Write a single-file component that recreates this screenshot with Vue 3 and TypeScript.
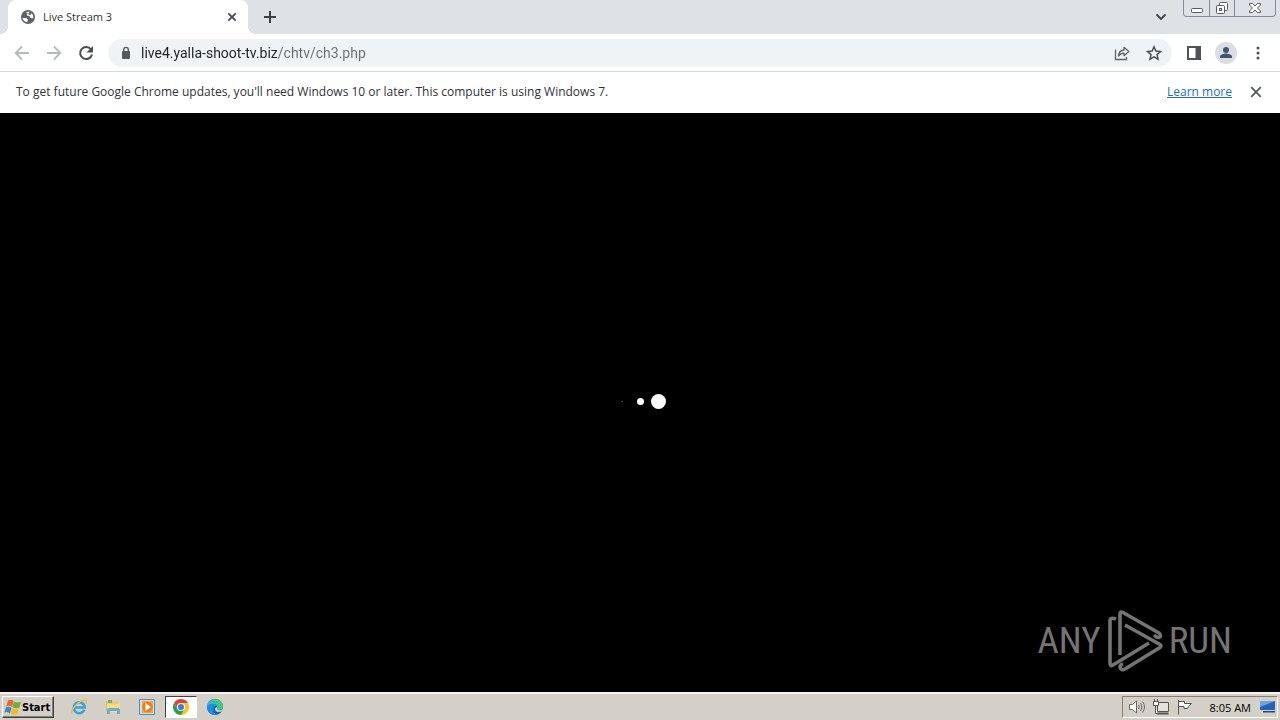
<script setup lang="ts">
import { ref } from 'vue'

const address = ref<string>('live4.yalla-shoot-tv.biz/chtv/ch3.php')
const showNotice = ref<boolean>(true)
const time = ref<string>('8:05 AM')
</script>

<template>
  <div class="desktop">
    <header class="tabstrip">
      <div class="tab">
        <svg class="globe" viewBox="0 0 16 16" width="16" height="16">
          <circle cx="8" cy="8" r="7" fill="#5f6368" />
          <path d="M2.600 9C5 8.700 7 9 7.800 10.200L7.300 13.300C5 12.900 3 11.400 2.600 9zM6 3.200L9.500 2.600 8.800 4.300 6.800 5.200 7 6.500 9.500 7 10.500 9 13.200 9.300C13.600 7 12.600 4.800 11 3.700L11.300 5.200 10 6 8.800 5.500z" fill="#fff" />
        </svg>
        <span class="tab-title">Live Stream 3</span>
        <button class="plain tab-close" aria-label="Close tab">
          <svg viewBox="0 0 16 16" width="16" height="16"><path d="M4.300 4.300l7.400 7.400M11.700 4.300l-7.400 7.400" stroke="#45494d" stroke-width="1.800" /></svg>
        </button>
      </div>
      <button class="plain new-tab" aria-label="New tab">
        <svg viewBox="0 0 16 16" width="16" height="16"><path d="M8 2v12M2 8h12" stroke="#3c4043" stroke-width="2" /></svg>
      </button>
      <button class="plain search-tabs" aria-label="Search tabs">
        <svg viewBox="0 0 16 16" width="16" height="16"><path d="M3.500 5.500L8 10l4.500-4.500" fill="none" stroke="#3c4043" stroke-width="1.800" /></svg>
      </button>
      <div class="window-controls">
        <button class="plain" aria-label="Minimize">
          <svg viewBox="0 0 24 16" width="24" height="16"><rect x="6.500" y="8.500" width="11" height="4" rx="1" fill="#fff" stroke="#555a66" /></svg>
        </button>
        <button class="plain" aria-label="Restore">
          <svg viewBox="0 0 24 16" width="24" height="16"><g fill="#fff" stroke="#555a66"><rect x="9.500" y="2.500" width="8" height="8" rx="1" /><rect x="6.500" y="5.500" width="8" height="8" rx="1" /><rect x="9.500" y="8.500" width="2" height="2" /></g></svg>
        </button>
        <button class="plain wide" aria-label="Close window">
          <svg viewBox="0 0 24 16" width="24" height="16"><path d="M6.500 3.500h3l2.500 2.500 2.500-2.500h3v1.500l-3 3 3 3v1.500h-3L12 10l-2.500 2.500h-3V11l3-3-3-3z" fill="#fff" stroke="#555a66" /></svg>
        </button>
      </div>
    </header>

    <nav class="toolbar" aria-label="Browser toolbar">
      <button class="plain nav" aria-label="Back">
        <svg viewBox="0 0 16 16" width="16" height="16"><path d="M15 8H2M8 1.500L1.700 8 8 14.500" fill="none" stroke="#b6b9bd" stroke-width="1.800" /></svg>
      </button>
      <button class="plain nav" aria-label="Forward">
        <svg viewBox="0 0 16 16" width="16" height="16"><path d="M1 8h13M8 1.500L14.300 8 8 14.500" fill="none" stroke="#b6b9bd" stroke-width="1.800" /></svg>
      </button>
      <button class="plain nav" aria-label="Reload">
        <svg viewBox="0 0 16 16" width="16" height="16"><path d="M13 4.500A6 6 0 1 0 14 9.500" fill="none" stroke="#4b4f53" stroke-width="2" /><path d="M15 1v6.500H8.500z" fill="#4b4f53" /></svg>
      </button>
      <div class="omnibox">
        <button class="plain lock" aria-label="View site information">
          <svg viewBox="0 0 12 14" width="12" height="14"><rect x="2" y="5" width="8" height="8" rx="1" fill="#55595d" /><path d="M3.700 6V3.700a2.300 2.300 0 0 1 4.600 0V6" fill="none" stroke="#55595d" stroke-width="1.400" /></svg>
        </button>
        <input v-model="address" class="address" type="text" aria-label="Address and search bar" spellcheck="false" />
        <button class="plain pill-icon" aria-label="Share this page">
          <svg viewBox="0 0 16 16" width="16" height="16"><path d="M1.500 4.500v10h11V12" fill="none" stroke="#5f6368" stroke-width="1.300" /><path d="M4.500 11C4.700 7.500 6.500 5.200 10 5V2.300L14.800 6.600 10 10.700V8.200C7.600 8.200 6 9 4.500 11z" fill="none" stroke="#5f6368" stroke-width="1.300" stroke-linejoin="round" /></svg>
        </button>
        <button class="plain pill-icon" aria-label="Bookmark this tab">
          <svg viewBox="0 0 16 16" width="16" height="16"><path d="M8 1.800l1.850 4.300 4.650.4-3.500 3.100 1.050 4.600L8 11.800l-4.050 2.400L5 9.600 1.500 6.500l4.650-.4z" fill="none" stroke="#4b4f53" stroke-width="1.500" /></svg>
        </button>
      </div>
      <div class="actions">
        <button class="plain action" aria-label="Side panel">
          <svg viewBox="0 0 16 16" width="16" height="16"><path d="M1 1h14v14H1zM3 3v10h6.500V3z" fill="#4f5357" fill-rule="evenodd" /></svg>
        </button>
        <button class="plain action" aria-label="Profile">
          <svg viewBox="0 0 22 22" width="22" height="22"><circle cx="11" cy="11" r="11" fill="#dadde3" /><circle cx="11" cy="8" r="3" fill="#46536e" /><path d="M5 16v-1.500c0-2 4-3 6-3s6 1 6 3V16z" fill="#46536e" /></svg>
        </button>
        <button class="plain action" aria-label="Menu">
          <svg viewBox="0 0 16 16" width="16" height="16" fill="#4b4f53"><circle cx="8" cy="3" r="1.500" /><circle cx="8" cy="8" r="1.500" /><circle cx="8" cy="13" r="1.500" /></svg>
        </button>
      </div>
    </nav>

    <section v-if="showNotice" class="notice">
      <p>To get future Google Chrome updates, you'll need Windows 10 or later. This computer is using Windows 7.</p>
      <a href="#">Learn more</a>
      <button class="plain notice-close" aria-label="Dismiss" @click="showNotice = false">
        <svg viewBox="0 0 16 16" width="16" height="16"><path d="M3.200 3.200l9.600 9.600M12.800 3.200l-9.600 9.600" stroke="#55595d" stroke-width="1.800" /></svg>
      </button>
    </section>

    <main class="player">
      <div class="loader" role="status" aria-label="Loading">
        <i class="dot tiny"></i><i class="dot small"></i><i class="dot large"></i>
      </div>
      <div class="watermark">
        <span>ANY</span>
        <svg viewBox="0 0 58 62" width="58" height="62" fill="none" stroke="#747474" stroke-width="3.600" stroke-linejoin="round" stroke-linecap="butt">
          <path d="M10 9Q4 7 4 11V53Q4 57 7 55L43 33" />
          <path d="M14 45V4Q14 1 17 2.500L53 23Q56 26 53 27.500Q51 28 48 25" />
          <path d="M19 15L54 34.500Q56 36 54 37.500L19 59Q15 61 14 57Q14 55 17 54" />
        </svg>
        <span>RUN</span>
      </div>
    </main>

    <footer class="taskbar">
      <button class="start">
        <svg viewBox="0 0 18 16" width="18" height="16">
          <path d="M4 1.500Q7 0 9.500 2L8 8Q5 6 2.300 7.500z" fill="#e8662b" />
          <path d="M10 2.500Q13 4.500 17 2.500L15.500 8.500Q12 10 8.500 8.200z" fill="#71ad3c" />
          <path d="M2 8.300Q5 7 7.500 9L6 14.500Q3.500 12 .500 13.500z" fill="#3d86c8" />
          <path d="M8.200 9.200Q11.500 11 15 9.500L13.500 15Q10 16.500 6.800 14.800z" fill="#f2ba26" />
        </svg>
        Start
      </button>
      <div class="launchers">
        <button class="plain launcher" aria-label="Internet Explorer">
          <svg viewBox="0 0 18 18" width="18" height="18" fill="none"><path d="M14.300 11.800A5.500 5.500 0 1 1 14.700 9.500H5" stroke="#38a3df" stroke-width="2.600" /><path d="M2.500 16C-.5 14 5 6 12 2.700c4-1.800 5.500-.4 3.700 2.900" stroke="#ebbd43" stroke-width="1.300" /></svg>
        </button>
        <button class="plain launcher" aria-label="File Explorer">
          <svg viewBox="0 0 18 18" width="18" height="18"><path d="M2 3h5l1 1.500h7V13H2z" fill="#e5bd58" /><path d="M4 2h4v3H4z" fill="#71b36d" /><path d="M3 5.500h13V14H3z" fill="#f8dd87" /><path d="M3 16v-4q0-2 2-2h9q2 0 2 2v4h-3v-3H6v3z" fill="#6aaed5" /></svg>
        </button>
        <button class="plain launcher" aria-label="Media Player">
          <svg viewBox="0 0 18 18" width="18" height="18"><path d="M1.500 1.500h15v15h-15z" fill="#c9e2f3" stroke="#4b8fc4" /><path d="M4 3h11v12H4z" fill="#f7a142" /><circle cx="9.500" cy="9" r="5.200" fill="#ef7d16" /><path d="M7.500 5.300l5.500 3.700-5.500 3.700z" fill="#fff" /></svg>
        </button>
        <button class="plain launcher active" aria-label="Google Chrome">
          <svg viewBox="0 0 18 18" width="18" height="18"><path d="M9 9L2.070 5A8 8 0 0 1 15.930 5z" fill="#e34133" /><path d="M9 9L15.930 5A8 8 0 0 1 9 17z" fill="#f9c51e" /><path d="M9 5h6.930L12 10z" fill="#f9c51e" /><path d="M2.070 5H9V9L5.500 11z" fill="#e34133" /><path d="M2.070 5L5.540 11 12.460 11 9 17A8 8 0 0 1 2.070 5z" fill="#2d9d50" /><circle cx="9" cy="9" r="4" fill="#fff" /><circle cx="9" cy="9" r="3.100" fill="#3e7de6" /></svg>
        </button>
        <button class="plain launcher" aria-label="Microsoft Edge">
          <svg viewBox="0 0 18 18" width="18" height="18"><circle cx="9" cy="9" r="8" fill="#1766b5" /><path d="M1 9A8 8 0 0 1 17 8.500c0 3-2.500 4-5.500 3.300-1-.3.300-1.300 0-2.800C11 6.500 4 5 1 9z" fill="#32b9d2" /><path d="M8 1.100C13 .5 17 4 17 8.500c0 2.800-2.500 4-5.500 3.300-1-.3.300-1.300 0-2.800C12 6 9 4 6 4z" fill="#4bc27e" /><path d="M1 9C3 5 9.500 5 11.300 8 8 7 5.500 11 8 14.500 9 16 10 16.500 11 16.700 5 18 1 14 1 9z" fill="#1f8fdc" /><path d="M11.300 9c-.5 1.800-.6 2.500.5 2.900 2 .7 4 .2 5-.9l-1 2.200c-3 1.500-6.800.8-6.800-2.200 0-1 1-2 2.300-2z" fill="#d4d0c8" /></svg>
        </button>
      </div>
      <div class="tray">
        <button class="plain" aria-label="Volume">
          <svg viewBox="0 0 18 16" width="18" height="16" fill="none" stroke="#666"><path d="M1.500 5.500h3l4-3.500v12l-4-3.500h-3z" fill="#fff" /><path d="M10.500 6q1.500 2 0 4M12.500 4q3 4 0 8M14.500 2.500q4 5.500 0 11" /></svg>
        </button>
        <button class="plain" aria-label="Network">
          <svg viewBox="0 0 18 16" width="18" height="16" fill="none" stroke="#555"><path d="M5.500 3.500h11v9h-11z" fill="#e4e1da" /><path d="M4.500 14.500h12" stroke-width="2" /><path d="M1.500 2.500h5v4h-5zM2.500 0v2.500M5.500 0v2.500M3.500 7v7.500h2" fill="#fff" /></svg>
        </button>
        <button class="plain" aria-label="Action Center">
          <svg viewBox="0 0 18 16" width="18" height="16"><path d="M2.500 1v14.500M2.500 2.500h6v2h7l-3 3-1 2H8v-2H2.500" fill="#fff" stroke="#555" /></svg>
        </button>
        <time>{{ time }}</time>
        <button class="plain" aria-label="Show desktop">
          <svg viewBox="0 0 18 16" width="18" height="16"><path d="M1 2h15v9H1z" fill="#2463b8" /><path d="M1 2h15L1 8z" fill="#6da4df" /><path d="M4 12h12v1.500H4z" fill="#24497c" /></svg>
        </button>
      </div>
    </footer>
  </div>
</template>

<style>
html, body { margin: 0; background: #000; }
</style>

<style scoped>
.desktop { display: flex; flex-direction: column; min-height: 100vh; font-family: "Open Sans", "Noto Sans", sans-serif; color: #303236; }
.desktop * { box-sizing: border-box; }
.plain { display: flex; align-items: center; justify-content: center; flex: none; padding: 0; border: 0; background: none; }
svg { display: block; flex: none; }
.tabstrip { display: flex; height: 34px; background: #dee1e6; }
.tab { position: relative; display: flex; align-items: center; flex: 0 1 240px; margin-left: 8px; padding: 0 8px 0 12px; border-radius: 8px 8px 0 0; background: #fff; }
.tab::before, .tab::after { content: ""; position: absolute; bottom: 0; width: 8px; height: 8px; }
.tab::before { right: 100%; background: radial-gradient(circle at 0 0, transparent 8px, #fff 8px); }
.tab::after { left: 100%; background: radial-gradient(circle at 100% 0, transparent 8px, #fff 8px); }
.tab-title { flex: 1; padding-left: 7px; font-size: 11px; line-height: 16px; white-space: nowrap; }
.new-tab { width: 28px; margin-left: 8px; }
.search-tabs { width: 28px; margin-left: auto; }
.window-controls { display: flex; height: 17px; margin: 0 4px 0 8px; border: 1px solid #868b96; border-top: 0; border-radius: 0 0 4px 4px; }
.window-controls button { width: 25px; }
.window-controls button + button { border-left: 1px solid #868b96; }
.window-controls .wide { width: 41px; }
.toolbar { display: flex; align-items: center; height: 38px; padding: 0 6px; border-bottom: 1px solid #d5d8dc; background: #fff; }
.nav { width: 32px; height: 32px; }
.omnibox { display: flex; flex: 1; align-items: center; height: 28px; margin-left: 6px; padding: 0 2px 0 12px; border-radius: 14px; background: #f0f3f5; }
.lock { width: 12px; }
.address { flex: 1; min-width: 0; height: 24px; margin-left: 9px; padding: 0; border: 0; outline: 0; background: linear-gradient(90deg, #202124 137px, #696d72 137px); background-clip: text; color: transparent; caret-color: #202124; font-family: Roboto, sans-serif; font-size: 14px; }
.pill-icon { width: 32px; }
.actions { display: flex; margin-left: 6px; }
.action { width: 32px; height: 32px; }
.notice { display: flex; align-items: center; height: 41px; padding: 0 16px 2px; background: #fff; font-size: 12px; line-height: 18px; }
.notice p { flex: 1; margin: 0; }
.notice a { color: #1f6fc0; }
.notice-close { width: 16px; margin-left: 16px; }
.player { position: relative; display: flex; flex: 1; align-items: center; justify-content: center; padding-bottom: 2px; background: #000; }
.loader { display: flex; }
.dot { display: flex; align-items: center; justify-content: center; width: 18px; height: 18px; }
.dot::before { content: ""; border-radius: 50%; background: #fff; }
.tiny::before { width: 2px; height: 1px; background: #555; }
.small::before { width: 7px; height: 7px; }
.large::before { width: 15px; height: 15px; }
.watermark { position: absolute; right: 48px; bottom: 20px; display: flex; align-items: center; gap: 5px; color: #747474; font-family: "Liberation Sans Narrow", "Roboto Condensed", Roboto, sans-serif; font-size: 37px; line-height: 62px; }
.taskbar { display: flex; align-items: center; height: 28px; padding: 0 2px; border-top: 2px solid #f4f2ee; background: #d4d0c8; color: #000; }
.start { display: flex; align-items: center; width: 52px; height: 22px; padding: 0 2px 0 1px; border: 1px solid; border-color: #fff #404040 #404040 #fff; background: #d4d0c8; box-shadow: inset -1px -1px #858078; font-family: "DejaVu Sans Condensed", sans-serif; font-size: 11px; font-weight: 700; white-space: nowrap; }
.launchers { display: flex; gap: 2px; margin-left: 9px; }
.launcher { width: 32px; height: 22px; }
.active { border: 1px solid; border-color: #404040 #fff #fff #404040; background: #fff; }
.tray { display: flex; align-items: center; gap: 6px; height: 22px; margin-left: auto; padding: 0 0 0 5px; border: 1px solid; border-color: #858078 #fff #fff #858078; font-size: 11px; }
.tray time { margin: 0 2px 0 10px; white-space: nowrap; }
</style>
